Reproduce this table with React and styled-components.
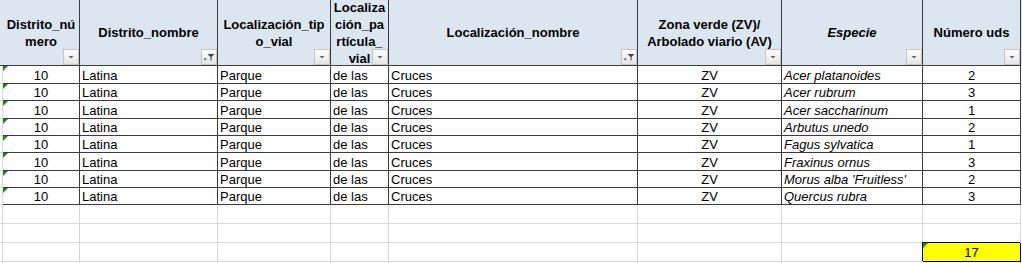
import React from 'react';
import styled, { createGlobalStyle, css } from 'styled-components';

const COLS = '3px 77px 138px 113px 58px 249px 144px 141px 98px 1fr';
const DARK = '#3c3c3c';
const GRID = '#d9d9d9';

const HEADERS = [
  { lines: ['Distrito_nú', 'mero'] },
  { lines: ['Distrito_nombre'], filtered: true },
  { lines: ['Localización_tip', 'o_vial'] },
  { lines: ['Localiza', 'ción_pa', 'rtícula_', 'vial'] },
  { lines: ['Localización_nombre'], filtered: true },
  { lines: ['Zona verde (ZV)/', 'Arbolado viario (AV)'] },
  { lines: ['Especie'], italic: true },
  { lines: ['Número uds'] },
];

const TREES = [
  ['Acer platanoides', 2],
  ['Acer rubrum', 3],
  ['Acer saccharinum', 1],
  ['Arbutus unedo', 2],
  ['Fagus sylvatica', 1],
  ['Fraxinus ornus', 3],
  ["Morus alba 'Fruitless'", 2],
  ['Quercus rubra', 3],
];

const ROW_HEIGHTS = [18, 17, 18, 17, 17, 18, 17, 17];

const GlobalStyle = createGlobalStyle`
  html, body {
    margin: 0;
    padding: 0;
    background: #fff;
    overflow: hidden;
  }
  body {
    font-family: "Liberation Sans", Arial, sans-serif;
    font-size: 13px;
    color: #000;
  }
`;

const Sheet = styled.div`
  width: 1022px;
  height: 263px;
  overflow: hidden;
`;

const Row = styled.div`
  display: grid;
  grid-template-columns: ${COLS};
  height: ${(p) => p.$h}px;
`;

const Gutter = styled.div`
  box-sizing: border-box;
  background: ${(p) => (p.$head ? '#dce6f1' : '#fff')};
  border-right: ${(p) => (p.$head ? 'none' : `1px solid ${GRID}`)};
  border-bottom: 1px solid ${(p) => (p.$head ? DARK : GRID)};
`;

const HeaderCell = styled.div`
  position: relative;
  box-sizing: border-box;
  display: flex;
  align-items: center;
  justify-content: center;
  overflow: hidden;
  background: #dce6f1;
  border-right: 1px solid ${DARK};
  border-bottom: 1px solid ${DARK};
`;

const HeaderText = styled.div`
  display: flex;
  flex-direction: column;
  align-items: center;
  font-weight: bold;
  font-style: ${(p) => (p.$italic ? 'italic' : 'normal')};
  line-height: 17px;
  white-space: nowrap;
  text-align: center;
`;

const FilterButton = styled.div`
  position: absolute;
  right: 0;
  bottom: 0;
  width: 16px;
  height: 16px;
  box-sizing: border-box;
  border: 1px solid #c4c4c4;
  background: linear-gradient(#ffffff, #e4e4e4);

  svg {
    display: block;
  }
`;

const Cell = styled.div`
  position: relative;
  box-sizing: border-box;
  display: flex;
  align-items: center;
  justify-content: ${(p) => (p.$align === 'center' ? 'center' : 'flex-start')};
  padding: 1px 2px 0;
  white-space: nowrap;
  overflow: hidden;
  font-style: ${(p) => (p.$italic ? 'italic' : 'normal')};
  background: #fff;
  border-right: 1px solid ${DARK};
  border-bottom: 1px solid ${DARK};
`;

const BlankCell = styled.div`
  position: relative;
  box-sizing: border-box;
  display: flex;
  align-items: center;
  justify-content: center;
  padding-top: 1px;
  border-right: 1px solid ${GRID};
  border-bottom: 1px solid ${GRID};
  ${(p) =>
    p.$total &&
    css`
      background: #ffff00;
      border-right-color: #000;
      border-bottom-color: #000;
      box-shadow: -1px -1px 0 0 #000;
    `}
`;

const Tail = styled.div`
  background: ${(p) => (p.$head ? '#dce6f1' : '#fff')};
`;

const Marker = styled.span`
  position: absolute;
  top: 0;
  left: 0;
  width: 0;
  height: 0;
  border-top: 5px solid #1a8a1a;
  border-right: 5px solid transparent;
`;

function FilterIcon({ active }) {
  return (
    <FilterButton>
      <svg width="14" height="14" viewBox="0 0 14 14">
        {active ? (
          <>
            <polygon points="1.5,8.5 5,8.5 3.25,10.5" fill="#555" />
            <polygon points="5.5,4 12.5,4 9.5,7 9.5,10.5 8.5,10.5 8.5,7" fill="#444" />
          </>
        ) : (
          <polygon points="4.5,6 9.5,6 7,8.5" fill="#666" />
        )}
      </svg>
    </FilterButton>
  );
}

export default function App() {
  return (
    <>
      <GlobalStyle />
      <Sheet>
        <Row $h={66}>
          <Gutter $head />
          {HEADERS.map((h) => (
            <HeaderCell key={h.lines.join('')}>
              <HeaderText $italic={h.italic}>
                {h.lines.map((line) => (
                  <span key={line}>{line}</span>
                ))}
              </HeaderText>
              <FilterIcon active={h.filtered} />
            </HeaderCell>
          ))}
          <Tail $head />
        </Row>

        {TREES.map(([name, count], i) => (
          <Row key={name} $h={ROW_HEIGHTS[i]}>
            <Gutter />
            <Cell $align="center">
              <Marker />
              10
            </Cell>
            <Cell>Latina</Cell>
            <Cell>Parque</Cell>
            <Cell>de las</Cell>
            <Cell>Cruces</Cell>
            <Cell $align="center">ZV</Cell>
            <Cell $italic>{name}</Cell>
            <Cell $align="center">{count}</Cell>
            <Tail />
          </Row>
        ))}

        {[0, 1, 2, 3].map((r) => (
          <Row key={r} $h={19}>
            <Gutter />
            {Array.from({ length: 7 }).map((_, c) => (
              <BlankCell key={c} />
            ))}
            {r === 2 ? (
              <BlankCell $total>
                <Marker />
                17
              </BlankCell>
            ) : (
              <BlankCell />
            )}
            <Tail />
          </Row>
        ))}
      </Sheet>
    </>
  );
}
